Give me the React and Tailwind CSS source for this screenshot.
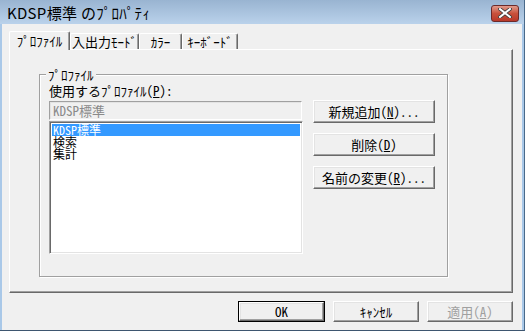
import React from 'react';

const font = { fontFamily: '"Noto Sans Mono CJK JP", "Noto Sans CJK JP", "Noto Sans", sans-serif' };
const titleFont = { fontFamily: '"Noto Sans CJK JP", "Noto Sans", sans-serif' };

function RaisedButton({ children, className = '', isDefault = false, disabled = false }) {
    return (
        <div className={`${isDefault ? 'border border-black' : ''} ${className}`}>
            <div
                className={`h-full flex items-center justify-center border border-t-white border-l-white border-r-[#696969] border-b-[#696969] bg-[#f0f0f0] shadow-[inset_-1px_-1px_0_#a0a0a0,inset_1px_1px_0_#e3e3e3] text-[13px] leading-none ${disabled ? 'text-[#a0a0a0]' : 'text-black'}`}
            >
                {children}
            </div>
        </div>
    );
}

function Tab({ label, active, width }) {
    return active ? (
        <div className={`relative z-10 h-[19px] -mb-px ${width} flex justify-center pt-[2px] bg-[#f0f0f0] border-l border-t border-l-white border-t-white border-r border-r-[#696969] rounded-t-[2px] shadow-[inset_-1px_0_0_#a0a0a0] text-[13px] leading-[14px]`}>
            {label}
        </div>
    ) : (
        <div className={`h-[16px] ${width} flex justify-center pt-[1px] bg-[#f0f0f0] border-l border-t border-l-white border-t-white border-r border-r-[#696969] rounded-t-[2px] shadow-[inset_-1px_0_0_#a0a0a0] text-[13px] leading-[14px]`}>
            {label}
        </div>
    );
}

export default function App() {
    const items = ['KDSP標準', '検索', '集計'];
    return (
        <div style={font} className="w-[525px] h-[331px] flex flex-col bg-[#a9c8e8] border-r border-b border-r-[#4a6a8a] border-b-[#3e5670] overflow-hidden">
            {/* title bar */}
            <div className="h-[24px] shrink-0 flex items-center justify-between pl-[7px] pr-[5px] bg-gradient-to-b from-[#99b4d1] to-[#bad2eb]">
                <span style={titleFont} className="text-[15px] leading-none tracking-[0.3px] text-black">KDSP標準 のﾌﾟﾛﾊﾟﾃｨ</span>
                <div className="mt-[2px] w-[28px] h-[17px] rounded-[3px] border border-[#6b2a2a] bg-gradient-to-b from-[#e09a8c] via-[#c8503b] to-[#b8382a] flex items-center justify-center">
                    <svg width="14" height="10" viewBox="0 0 14 10">
                        <path d="M2 1 L12 9 M12 1 L2 9" stroke="#3a3a3a" strokeWidth="3.6" strokeLinecap="square" />
                        <path d="M2 1 L12 9 M12 1 L2 9" stroke="#ffffff" strokeWidth="2" strokeLinecap="square" />
                    </svg>
                </div>
            </div>

            {/* client area */}
            <div className="flex-1 ml-[2px] mr-[2px] bg-[#f0f0f0] px-[7px] pt-[7px] text-black">
                <div className="h-[18px] flex items-end">
                    <Tab label="ﾌﾟﾛﾌｧｲﾙ" width="w-[61px]" active />
                    <Tab label="入出力ﾓｰﾄﾞ" width="w-[69px]" />
                    <Tab label="ｶﾗｰ" width="w-[43px]" />
                    <Tab label="ｷｰﾎﾞｰﾄﾞ" width="w-[56px]" />
                </div>

                <div className="h-[244px] w-[504px] border border-t-white border-l-white border-r-[#696969] border-b-[#696969] shadow-[inset_-1px_-1px_0_#a0a0a0] pl-[29px] pt-[24px]">
                    <div className="relative w-[409px] h-[203px] border border-[#a0a0a0] shadow-[1px_1px_0_white,inset_1px_1px_0_white] pl-[9px] pt-[9px]">
                        <span className="absolute -top-[7px] left-[6px] px-[2px] bg-[#f0f0f0] text-[13px] leading-[13px]">ﾌﾟﾛﾌｧｲﾙ</span>
                        <div className="flex gap-[10px]">
                            <div className="w-[254px]">
                                <div className="text-[13px] leading-[14px] h-[17px]">
                                    使用するﾌﾟﾛﾌｧｲﾙ(<u>P</u>):
                                </div>
                                <div className="h-[19px] w-[253px] border border-t-[#a0a0a0] border-l-[#a0a0a0] border-r-white border-b-white shadow-[inset_1px_1px_0_#e3e3e3] bg-[#f0f0f0] text-[13px] leading-[17px] pl-[3px] text-[#8a8a8a]">
                                    KDSP標準
                                </div>
                                <div className="mt-px h-[133px] w-[254px] border border-t-[#a0a0a0] border-l-[#a0a0a0] border-r-white border-b-white shadow-[inset_1px_1px_0_#696969,inset_-1px_-1px_0_#e3e3e3] bg-white p-[2px]">
                                    {items.map((it, i) => (
                                        <div
                                            key={it}
                                            className={`h-[12px] text-[12px] leading-[12px] pl-[1px] ${i === 0 ? 'bg-[#3399ff] text-white' : 'text-black'}`}
                                        >
                                            {it}
                                        </div>
                                    ))}
                                </div>
                            </div>
                            <div className="pt-[16px] flex flex-col gap-[10px]">
                                <RaisedButton className="w-[122px] h-[23px]">
                                    新規追加(<u>N</u>)...
                                </RaisedButton>
                                <RaisedButton className="w-[122px] h-[23px]">
                                    削除(<u>D</u>)
                                </RaisedButton>
                                <RaisedButton className="w-[122px] h-[23px]">
                                    名前の変更(<u>R</u>)...
                                </RaisedButton>
                            </div>
                        </div>
                    </div>
                </div>

                <div className="mt-[8px] w-[504px] flex justify-end gap-[8px]">
                    <RaisedButton isDefault className="w-[87px] h-[21px]">OK</RaisedButton>
                    <RaisedButton className="w-[86px] h-[21px]">ｷｬﾝｾﾙ</RaisedButton>
                    <RaisedButton disabled className="w-[86px] h-[21px]">
                        適用(<u>A</u>)
                    </RaisedButton>
                </div>
            </div>
        </div>
    );
}
